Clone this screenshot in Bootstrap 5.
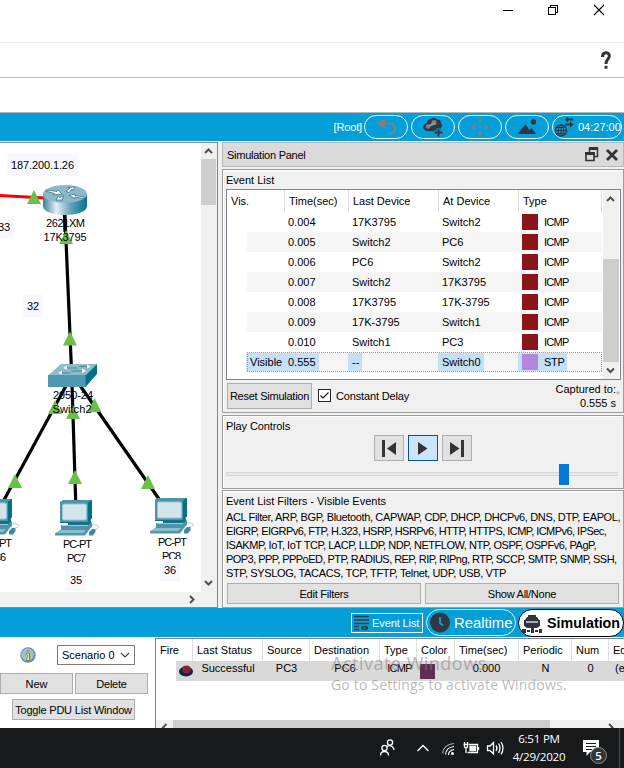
<!DOCTYPE html>
<html lang="en">
<head>
<meta charset="utf-8">
<meta name="viewport" content="width=device-width, initial-scale=1">
<title>Simulation</title>
<link href="https://cdn.jsdelivr.net/npm/bootstrap@5.3.0/dist/css/bootstrap.min.css" rel="stylesheet">
<style>
body{width:624px;height:768px;overflow:hidden;background:#fff;color:#000;font:11px/14px "Liberation Sans",Arial,sans-serif;white-space:nowrap}
svg{display:block;flex:none}
.titlebar{height:43px;border-bottom:1px solid #ececec}
.helpbar{height:35px;border-bottom:1px solid #bdbdbd}
.blankbar{height:35px;border-bottom:1px solid #b5b5b5}
.bluebar{background:#049fd9;color:#fff}
.topblue{height:28px;padding-right:2px}
.pill{width:44px;height:24px;border:1px solid #e8f6fc;border-radius:12px}
.pill-time{width:70px}
.mainarea{height:467px;background:#f0f0f0;border-top:1px solid #fff}
.canvasframe{width:218px;height:466px;border:solid #85858c;border-width:1px 1px 1px 0;background:#f0f0f0}
.vtrack{width:16px;background:#f0f0f0}
.vthumb{background:#cdcdcd}
.dock{width:402px;margin-left:4px}
.tight{letter-spacing:-.25px}
.docktitle{height:25px;border:1px solid #b8b8b8;background:#dadada;padding:0 4px}
.group{border:1px solid #9d9d9d;box-shadow:inset 1px 1px #fff;padding:0 3px}
.g1{height:244px;margin-top:2px}
.g2{height:74px;margin-top:2px}
.g3{height:118px;margin-top:1px}
.evlist{height:191px;width:395px;border:1px solid #82828c;background:#fff}
.evrow{display:grid;grid-template-columns:37px 64px 90px 80px 84px;width:355px;height:20px;margin-left:20px;align-items:center}
.evhead{display:grid;grid-template-columns:58px 64px 90px 80px 83px;height:22px;align-items:center}
.evhead>span,.pduhead>span{border-right:1px solid #dedede;height:22px;line-height:22px;padding-left:4px}
.evrow{background:#fff}
.evrow.alt{background:#f5f5f5}
.evrow>span{padding-left:4px;line-height:20px}
.evrow>span:first-child{padding-left:3px}
.proto{display:flex;align-items:center;gap:6px;letter-spacing:-.7px}
.sq{width:16px;height:16px;background:#8b1518}
.sqstp{background:#b486de}
.evsel::after{content:"";position:absolute;inset:0;--h:repeating-linear-gradient(90deg,#ff8020 0 1px,transparent 1px 2px);--v:repeating-linear-gradient(#ff8020 0 1px,transparent 1px 2px);background:var(--h) top/100% 1px no-repeat,var(--h) bottom/100% 1px no-repeat,var(--v) left/1px 100% no-repeat,var(--v) right/1px 100% no-repeat}
.hl{background:#c5dff7;padding:0 3px 0 4px;margin-left:-4px;height:18px;line-height:18px;display:inline-block;vertical-align:top;margin-top:1px}
.hlproto{display:inline-flex;align-items:center;gap:6px;padding-right:2px;letter-spacing:-.3px}
.winbtn{background:#e1e1e1;border:1px solid #adadad;height:21px;display:flex;align-items:center;justify-content:center}
.playbtn{width:30px;height:26px}
.playon{background:#cce4f7;border:1px solid #00569c}
.checkbox{width:13px;height:13px;border:1px solid #222;background:#fff;margin:6px 5px 0 6px}
.slider{height:4px;width:392px;border:1px solid #d3d6d6;background:#e7eaea;margin-top:11px}
.knob{width:10px;height:21px;background:#0078d7;left:332px;top:-9px}
.filters{letter-spacing:-.36px}
.filters .f2{letter-spacing:-.54px}
.filters .f3{letter-spacing:-.46px}
.star{right:-4px;top:7px;color:#aaa;font-size:10px}
.bottomblue{height:29px}
.evbtn{width:72px;height:20px;border:1px solid #fff;margin-right:3px}
.realtime{width:90px;height:27px;border:1px solid #d9f1fb;border-radius:14px;font-size:14.8px;margin-right:2px}
.simtab{width:106px;height:28px;border:1px solid #000;border-radius:14px;background:#fff;color:#000;font-weight:700;font-size:14.3px}
.lower{height:91px;overflow:hidden}
.leftpane{width:155px}
.selbox{width:78px;height:20px;border:1px solid #7a7a7a;background:#fff;padding:0 4px;margin-left:21px}
.pdu{width:469px;border:solid #82828c;border-width:1px 0 0 1px;margin-top:1px}
.pduhead,.pdurow{display:grid;grid-template-columns:37px 70px 47px 70px 37px 38px 64px 53px 37px 15px}
.pduhead>span:last-child,.pdurow>span:last-child{overflow:hidden;border:0}
.pdurow{height:20px}
.pdurow>span{text-align:center;line-height:15px}
.rowbg{background:linear-gradient(90deg,transparent 20px,#d9d9d9 20px)}
.swatch{width:15px;height:15px;margin:3px 0 0 3px;background:#5e2f51}
.hscroll{height:8px;background:#f0f0f0;margin-top:39px}
.taskbar{height:40px;background:#17191a;color:#fff;font:11.6px/18px "Open Sans","Noto Sans",sans-serif;letter-spacing:-.25px}
.watermark{left:331px;top:651px;color:rgba(130,130,130,.56);font-family:"Open Sans","Noto Sans",sans-serif;pointer-events:none}
.wm1{font-size:18px;line-height:24px;letter-spacing:.5px}
.wm2{font-size:14px;line-height:20px;letter-spacing:.18px}
</style>
<script src="https://cdn.jsdelivr.net/npm/bootstrap@5.3.0/dist/js/bootstrap.bundle.min.js"></script>
</head>
<body>
<header class="titlebar d-flex justify-content-end">
  <svg width="144" height="42" viewBox="480 0 144 42" fill="none" stroke="#000" shape-rendering="crispEdges"><path d="M503 10.500H513M548.500 7.500H555.500V14.500H548.500ZM550.500 7V5.500H557.500V12.500H556"/><path d="M594 5L604 15M604 5L594 15" shape-rendering="auto" stroke-width="1.1"/></svg>
</header>
<div class="helpbar d-flex justify-content-end">
  <svg width="24" height="34" viewBox="600 43 24 34" fill="none" stroke="#333338" stroke-width="3"><path d="M602.500 57C602.500 51.500 609.300 51.500 609.300 56C609.300 59.300 606 59 606 64"/><path d="M606 65.800V68.700"/></svg>
</div>
<div class="blankbar"></div>

<nav class="bluebar topblue d-flex align-items-center justify-content-end">
  <span style="margin-right:2px;letter-spacing:-.15px">[Root]</span>
  <div class="d-flex" style="gap:3px">
    <div class="pill"><svg width="42" height="22" viewBox="365 116 42 22"><path d="M376 123.500L385 118.500V128.500Z" fill="#808080"/><path d="M384 123.500H390Q395 124 395 129Q394.500 133.500 389 133.500" fill="none" stroke="#808080" stroke-width="2.200"/></svg></div>
    <div class="pill"><svg width="42" height="22" viewBox="412 116 42 22"><path d="M427 131Q423 130 423.500 126.500Q424 123.500 427 123Q427 119 431 119Q434 116.500 437 119.500Q441 119 441 123Q443 125 441 128V130Q435 132 427 131Z" fill="#333840"/><circle cx="428" cy="126.500" r="2.300" fill="#777f86"/><circle cx="434" cy="122.500" r="2.600" fill="#777f86"/><path d="M429 126L435 123" stroke="#8d969d" stroke-width="2"/><path d="M438.500 128V137M434 132.500H443" stroke="#049fd9" stroke-width="4"/><path d="M438.500 128.500V136.500M434.500 132.500H442.500" stroke="#333840" stroke-width="2"/></svg></div>
    <div class="pill"><svg width="42" height="22" viewBox="459 116 42 22" fill="#808080"><path d="M477 121.500L480 117.500L483 121.500ZM477 132.500H483L480 136.500ZM475 124V130L470.500 127ZM485 124L489.500 127L485 130Z"/><circle cx="480" cy="127" r="1.300"/></svg></div>
    <div class="pill"><svg width="42" height="22" viewBox="506 116 42 22" fill="#333840"><path d="M517.500 134L525.500 124.500L529.500 130L531.500 128L536 134Z"/><circle cx="533.500" cy="122" r="2.700"/></svg></div>
    <div class="pill pill-time d-flex align-items-center"><svg width="23" height="22" viewBox="553 116 23 22" fill="none" stroke="#333840"><circle cx="561" cy="130.500" r="5.600" stroke-width="1.300"/><ellipse cx="561" cy="130.500" rx="2.600" ry="5.600"/><path d="M555 130.500H567M556 127.500H566M556 133.500H566M561 125V136"/><path d="M567 119.500H573M565 124.500H571" stroke-width="2"/><path d="M564.500 119.500L568 116.500V122.500ZM573.500 124.500L570 121.500V127.500Z" fill="#333840" stroke="none"/></svg><span style="margin-left:2px">04:27:00</span></div>
  </div>
</nav>

<main class="mainarea d-flex">
  <section class="canvasframe">
    <div class="d-flex">
      <svg width="201" height="449" viewBox="0 143 201 449" font-family="Liberation Sans, Arial, sans-serif" font-size="11" text-anchor="middle">
        <defs>
          <linearGradient id="cyl"><stop offset="0" stop-color="#3d7d94"/><stop offset=".3" stop-color="#e4eff3"/><stop offset=".65" stop-color="#5d9fb5"/><stop offset="1" stop-color="#08738e"/></linearGradient>
          <path id="tri" d="M0 -7L7 7H-7Z" fill="#6abf4b"/>
          <g id="pc">
            <path d="M60 502L64 500H92V518L88 523H60Z" fill="#01708b"/>
            <path d="M60 502L63 500H92L88 503V522H60Z" fill="#4b94ab"/>
            <path d="M88 503L92 500V518L88 522Z" fill="#01708b"/>
            <rect x="62.500" y="504" width="24" height="16" rx="1.500" fill="#d4e4eb" stroke="#9bc3d1"/>
            <path d="M68 522H87L91 520V524L88 526H68Z" fill="#176f88"/>
            <path d="M61 525H88L92 522V527L88 530H61Z" fill="#4b94ab"/>
            <path d="M62 525.500H88" stroke="#a5cad6"/>
            <path d="M61 529.500H87L92 526L85 535.500H55V533.500Z" fill="#4e98ae"/>
            <path d="M61 530H86L83 533H56Z" fill="#8dbccb"/>
            <path d="M89 532L92 529H95.500V532L93 535.500H89Z" fill="#4189a1"/>
            <path d="M92 525Q98 524 98.500 527Q98 529 95 529" fill="none" stroke="#b3ced6"/>
          </g>
        </defs>
        <rect y="143" width="201" height="449" fill="#fff"/>
        <g fill="#f7f8ff"><rect x="7" y="154" width="71" height="22"/><rect y="216" width="14" height="22"/><rect x="23" y="295" width="20" height="22"/><rect x="66" y="569" width="20" height="22"/></g>
        <path d="M0 195.500L44 198" stroke="#f00" stroke-width="3"/>
        <g stroke="#000" stroke-width="3.200"><path d="M64.500 205L71.500 370M67 384L4 500M72 384L75.700 501M79 384L159 499"/></g>
        <path d="M43 194V206C43 218 87 218 87 206V194Z" fill="url(#cyl)"/>
        <ellipse cx="65" cy="194" rx="22" ry="9" fill="#8cb8c9"/>
        <g fill="#fff" stroke="#236b80" stroke-width=".7"><path d="M46 190L57 191.500L58 190L62 194L53 195L54.500 193.500L45.500 191Z"/><path d="M66 191.500L70 188L68 187.500L75 187L73 190.500L72 189L69 192.500Z"/><path d="M84 197L75 195.500L75 194L69 195.500L75 198.500V197L83 198.500Z"/><path d="M56 200L58 196.500L60 197.500L64 195.500L62 199L63 200Z"/></g>
        <path d="M64.500 215L65 232" stroke="#000" stroke-width="3.200"/>
        <path d="M48 375.500L61 364H97L86 375.500Z" fill="#8bbacb"/>
        <rect x="48" y="375" width="38" height="12" fill="#4f9ab2"/>
        <path d="M85.500 375.500L97 364V374L85.500 387Z" fill="#01708b"/>
        <g stroke="#4a8499" fill="none"><path d="M66 368H77M61 373H70M71 371H83M79 366.500H89"/></g>
        <g fill="#fff"><path d="M63 368L67 365.500V369.500ZM58 373L62 370.500V374.500ZM86 371L82 368.500V373ZM91 366.500L87 364.500V368.500Z"/></g>
        <use href="#tri" x="34" y="197"/><use href="#tri" x="66" y="237"/><use href="#tri" x="70" y="338.500"/><use href="#tri" x="55" y="407"/><use href="#tri" x="73" y="412"/><use href="#tri" x="94.500" y="405"/><use href="#tri" x="15" y="481"/><use href="#tri" x="75" y="477"/><use href="#tri" x="148" y="482"/>
        <use href="#pc"/><use href="#pc" x="95" y="-2"/><use href="#pc" x="-80" y="-1"/>
        <g>
          <text x="42.500" y="169" textLength="63">187.200.1.26</text>
          <text x="4" y="231">33</text><text x="33" y="310">32</text>
          <text x="65.500" y="227" textLength="39">2621XM</text>
          <text x="65" y="241" textLength="43">17K3795</text>
          <text x="73" y="399" textLength="40">2950-24</text>
          <text x="72" y="413" textLength="39">Switch2</text>
          <text x="77.500" y="548" textLength="29">PC-PT</text><text x="76.500" y="562" textLength="19">PC7</text>
          <text x="172.500" y="546" textLength="29">PC-PT</text><text x="171.500" y="560" textLength="19">PC8</text>
          <text x="-2.500" y="547" textLength="29">PC-PT</text><text x="-3.500" y="561" textLength="19">PC6</text>
          <text x="76" y="584">35</text>
          <rect x="160" y="559" width="20" height="22" fill="#f7f8ff"/><text x="170" y="574">36</text>
        </g>
      </svg>
      <div class="vtrack d-flex flex-column">
        <svg width="16" height="16" viewBox="0 0 16 16"><path d="M4 10L7.500 6.500L11 10" fill="none" stroke="#505050" stroke-width="2"/></svg>
        <div class="vthumb" style="height:46px;width:15px"></div>
        <svg class="mt-auto" width="16" height="18" viewBox="0 0 16 18"><path d="M4 7L7.500 10.500L11 7" fill="none" stroke="#505050" stroke-width="2"/></svg>
      </div>
    </div>
    <svg width="201" height="15" viewBox="0 0 201 15"><path d="M190 4L193.500 7.500L190 11" fill="none" stroke="#505050" stroke-width="2"/></svg>
  </section>

  <section class="dock">
    <div class="docktitle d-flex align-items-center justify-content-between"><span class="tight">Simulation Panel</span>
      <svg width="36" height="20" viewBox="583 145 36 20" fill="none" stroke="#333338"><path d="M589.500 152V148.500H597.500V156.500H594" stroke-width="1.500"/><path d="M589 148.500H598" stroke-width="3"/><path d="M586 153.500H594V160.500H586Z" stroke-width="1.600" fill="#dadada"/><path d="M585 153.500H595" stroke-width="3"/><path d="M607 150L617 160M617 150L607 160" stroke-width="2.800"/></svg>
    </div>
    <div class="group g1">
      <div style="padding-top:3px;height:19px">Event List</div>
      <div class="evlist d-flex">
        <div style="width:376px">
          <div class="evhead"><span>Vis.</span><span>Time(sec)</span><span>Last Device</span><span>At Device</span><span>Type</span></div>
          <div>
            <div class="evrow"><span></span><span>0.004</span><span>17K3795</span><span>Switch2</span><span class="proto"><i class="sq"></i>ICMP</span></div>
            <div class="evrow alt"><span></span><span>0.005</span><span>Switch2</span><span>PC6</span><span class="proto"><i class="sq"></i>ICMP</span></div>
            <div class="evrow"><span></span><span>0.006</span><span>PC6</span><span>Switch2</span><span class="proto"><i class="sq"></i>ICMP</span></div>
            <div class="evrow alt"><span></span><span>0.007</span><span>Switch2</span><span>17K3795</span><span class="proto"><i class="sq"></i>ICMP</span></div>
            <div class="evrow"><span></span><span>0.008</span><span>17K3795</span><span>17K-3795</span><span class="proto"><i class="sq"></i>ICMP</span></div>
            <div class="evrow alt"><span></span><span>0.009</span><span>17K-3795</span><span>Switch1</span><span class="proto"><i class="sq"></i>ICMP</span></div>
            <div class="evrow"><span></span><span>0.010</span><span>Switch1</span><span>PC3</span><span class="proto"><i class="sq"></i>ICMP</span></div>
            <div class="evrow alt evsel position-relative"><span><b class="hl fw-normal">Visible</b></span><span><b class="hl fw-normal">0.555</b></span><span><b class="hl fw-normal">--</b></span><span><b class="hl fw-normal">Switch0</b></span><span><b class="hl hlproto fw-normal"><i class="sq sqstp"></i>STP</b></span></div>
          </div>
        </div>
        <div class="vtrack d-flex flex-column">
          <svg width="16" height="69" viewBox="0 0 16 69"><path d="M4 11L7.500 7.500L11 11" fill="none" stroke="#505050" stroke-width="2"/></svg>
          <div class="vthumb" style="height:103px"></div>
          <svg width="16" height="16" viewBox="0 0 16 16"><path d="M4 6.500L7.500 10L11 6.500" fill="none" stroke="#505050" stroke-width="2"/></svg>
        </div>
      </div>
      <div class="d-flex align-items-start" style="padding-top:3px">
        <div class="winbtn tight" style="width:85px;height:26px;margin-left:1px">Reset Simulation</div>
        <div class="checkbox"><svg width="11" height="11" viewBox="0 0 11 11"><path d="M1.500 5.500L4 8L9.500 2.500" fill="none" stroke="#222" stroke-width="1.200"/></svg></div>
        <span style="margin-top:6px;letter-spacing:-.15px">Constant Delay</span>
        <div class="ms-auto text-end position-relative" style="margin-right:4px;margin-top:-1px">Captured to:<br>0.555 s<span class="star position-absolute">*</span></div>
      </div>
    </div>
    <div class="group g2">
      <div style="padding-top:3px;height:19px;letter-spacing:-.1px">Play Controls</div>
      <div class="d-flex justify-content-center" style="gap:4px;padding-right:1px">
        <div class="winbtn playbtn"><svg width="28" height="24" viewBox="0 0 28 24" fill="#333338"><path d="M7 4H10V21H7ZM21 6V19L12 12.500Z"/></svg></div>
        <div class="winbtn playbtn playon"><svg width="28" height="24" viewBox="0 0 28 24" fill="#333338"><path d="M9 6V19L18.500 12.500Z"/></svg></div>
        <div class="winbtn playbtn"><svg width="28" height="24" viewBox="0 0 28 24" fill="#333338"><path d="M7 6V19L16.500 12.500ZM18 4H21V21H18Z"/></svg></div>
      </div>
      <div class="slider position-relative"><div class="knob position-absolute"></div></div>
    </div>
    <div class="group g3">
      <div style="padding-top:3px;height:19px">Event List Filters - Visible Events</div>
      <div class="filters">
        <div>ACL Filter, ARP, BGP, Bluetooth, CAPWAP, CDP, DHCP, DHCPv6, DNS, DTP, EAPOL,</div>
        <div class="f2">EIGRP, EIGRPv6, FTP, H.323, HSRP, HSRPv6, HTTP, HTTPS, ICMP, ICMPv6, IPSec,</div>
        <div class="f3">ISAKMP, IoT, IoT TCP, LACP, LLDP, NDP, NETFLOW, NTP, OSPF, OSPFv6, PAgP,</div>
        <div class="f2">POP3, PPP, PPPoED, PTP, RADIUS, REP, RIP, RIPng, RTP, SCCP, SMTP, SNMP, SSH,</div>
        <div>STP, SYSLOG, TACACS, TCP, TFTP, Telnet, UDP, USB, VTP</div>
      </div>
      <div class="d-flex tight" style="gap:4px;padding:3px 0 0 1px"><div class="winbtn" style="width:194px">Edit Filters</div><div class="winbtn" style="width:194px">Show All/None</div></div>
    </div>
  </section>
</main>

<nav class="bluebar bottomblue d-flex align-items-center justify-content-end">
  <div class="evbtn d-flex align-items-center"><svg width="20" height="18" viewBox="0 0 20 18" fill="none" stroke="#333840" stroke-width="1.500"><path d="M2 2.500H17M2 6H17M2 9.500H17M2 12.500H7M2 15.500H7"/><ellipse cx="12.500" cy="14" rx="3.500" ry="2.300" fill="#333840" stroke="none"/><circle cx="12.500" cy="14" r="1" fill="#049fd9" stroke="none"/></svg><span style="letter-spacing:-.1px">Event List</span></div>
  <div class="realtime d-flex align-items-center"><svg width="27" height="25" viewBox="0 0 27 25"><circle cx="13" cy="12.500" r="10" fill="#333840"/><path d="M13 7V13L16 15.500" fill="none" stroke="#049fd9" stroke-width="2"/></svg>Realtime</div>
  <div class="simtab d-flex align-items-center"><svg width="28" height="26" viewBox="0 0 28 26" fill="#333338"><path d="M9 5H17V7H18L20 10H21V16L18 18H8L5 16V10H6L8 7H9Z"/><path d="M7 11H19V13H7Z" fill="#a9adb1"/><path d="M3 19H7V23H3ZM8 20H11V22H8ZM12 18H15V23H12ZM16 20H19V22H16ZM20 19H23V23H20Z"/></svg><span>Simulation</span></div>
</nav>

<section class="lower d-flex">
  <div class="leftpane">
    <div class="d-flex align-items-center" style="padding:8px 0 0 20px">
      <svg width="16" height="16" viewBox="0 0 16 16"><circle cx="8" cy="8" r="7.700" fill="#6b8f9c"/><circle cx="7.500" cy="7.500" r="6.300" fill="#9fc1cc"/><path d="M8 3.500V5.500M6.500 7H8.500V12M6 12.500H10" stroke="#3e4b36" stroke-width="2.200" fill="none"/><path d="M8 3.800V5.200M7 7H8.300V12M6.500 12.300H9.500" stroke="#f2e96b" stroke-width="1.400" fill="none"/></svg>
      <div class="selbox d-flex align-items-center justify-content-between">Scenario 0<svg width="10" height="8" viewBox="0 0 10 8"><path d="M1 2L5 6L9 2" fill="none" stroke="#444" stroke-width="1.200"/></svg></div>
    </div>
    <div class="d-flex" style="gap:2px;padding-top:8px"><div class="winbtn" style="width:73px">New</div><div class="winbtn tight" style="width:73px">Delete</div></div>
    <div class="winbtn" style="width:123px;margin:5px 0 0 12px;letter-spacing:-.2px">Toggle PDU List Window</div>
  </div>
  <div class="pdu overflow-hidden">
    <div class="pduhead"><span>Fire</span><span>Last Status</span><span>Source</span><span>Destination</span><span>Type</span><span>Color</span><span>Time(sec)</span><span>Periodic</span><span>Num</span><span>Edit</span></div>
    <div class="pdurow rowbg"><span><svg width="37" height="20" viewBox="0 0 37 20"><ellipse cx="30" cy="10.500" rx="7" ry="5" fill="#0b2742"/><ellipse cx="30.500" cy="8.500" rx="4.200" ry="4" fill="#8f2039"/></svg></span><span>Successful</span><span>PC3</span><span>PC6</span><span style="letter-spacing:-.7px;padding-left:2px">ICMP</span><span><i class="swatch d-block"></i></span><span style="padding-right:1px">0.000</span><span>N</span><span>0</span><span class="text-start" style="padding-left:6px">(edit)</span></div>
    <div class="hscroll d-flex"><svg width="17" height="8" viewBox="0 0 17 8"><path d="M10.500 4L7 7.500L10.500 11" fill="none" stroke="#505050" stroke-width="2"/></svg><div class="vthumb" style="width:377px"></div><svg class="ms-auto" width="22" height="8" viewBox="0 0 22 8"><path d="M7 4L10.500 7.500L7 11" fill="none" stroke="#505050" stroke-width="2"/></svg></div>
  </div>
</section>

<footer class="taskbar d-flex justify-content-end">
  <svg width="134" height="40" viewBox="376 728 134 40" fill="none" stroke="#fff" stroke-width="1.300"><circle cx="390" cy="742.500" r="2.600"/><path d="M386 747Q389 744.500 392 746.500Q394 748 394 750"/><circle cx="384.500" cy="748" r="2.600" fill="#17191a"/><path d="M380.500 755.500Q380.500 751.500 384.500 751.500Q388.500 751.500 388.500 755.500"/><path d="M417.500 751L423 745.500L428.500 751"/><g stroke-width="1.200"><path d="M442.500 753.500Q443.500 744.500 454 743.500" stroke="#aaa"/><path d="M445.500 754.500Q446 747.500 454 746.500M448.500 755Q448.500 750.500 454 749.500"/></g><circle cx="452.500" cy="753.500" r="1.500" fill="#fff" stroke="none"/><path d="M469 744.500H477.500V752.500H467.500"/><path d="M470 746.500H475.500V750.500H470Z" fill="#fff"/><path d="M478.500 747V750M463.500 744.500H468.500M464.500 742V744M467.500 742V744M464.500 745V747Q466 748.500 467.500 747V745M466 748V753"/><path d="M487.500 746H490L493.500 742.500V754L490 750.500H487.500Z"/><path d="M496 745.500Q498 748 496 751M498.500 743.500Q501.500 748 498.500 753M501 742Q505 748 501 754.500"/></svg>
  <div class="text-center" style="width:58px;padding-top:2px">6:51 PM<br>4/29/2020</div>
  <svg width="56" height="40" viewBox="568 728 56 40"><path d="M583 740H599V752H590L586.500 756V752H583Z" fill="#fff"/><path d="M586 743.500H596M586 746.500H596M586 749.500H592" stroke="#17191a"/><circle cx="598.500" cy="755.500" r="8" fill="#333538" stroke="#8c8c8c"/><text x="598.500" y="760" text-anchor="middle" font-size="11.500" font-weight="600" fill="#fff" font-family="Open Sans, sans-serif">5</text><path d="M619.500 728V768" stroke="#4b4b4b"/></svg>
</footer>
<div class="watermark position-absolute"><div class="wm1">Activate Windows</div><div class="wm2">Go to Settings to activate Windows.</div></div>
</body>
</html>
